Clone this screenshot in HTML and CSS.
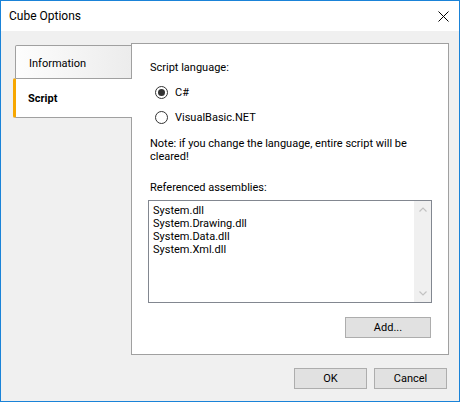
FILE: index.html
```html
<!DOCTYPE html>
<html>
<head>
<meta charset="utf-8">
<link rel="stylesheet" href="styles.css">
</head>
<body>
<div class="window">
  <div class="titlebar">
    <span class="title">Cube Options</span>
    <svg class="close" width="11" height="11" viewBox="0 0 11 11"><path d="M0.5 0.5 L10.5 10.5 M10.5 0.5 L0.5 10.5" stroke="#000" stroke-width="1" fill="none"/></svg>
  </div>
  <div class="client">
    <div class="main">
      <div class="tabs">
        <div class="tab">Information</div>
        <div class="tab selected">Script</div>
      </div>
      <div class="panel">
        <div class="label">Script language:</div>
        <div class="radios">
          <div class="radio"><span class="dot checked"></span><span>C#</span></div>
          <div class="radio"><span class="dot"></span><span>VisualBasic.NET</span></div>
        </div>
        <p class="note">Note: if you change the language, entire script will be<br>cleared!</p>
        <div class="label label-assemblies">Referenced assemblies:</div>
        <div class="listbox">
          <div class="items">
            <div>System.dll</div>
            <div>System.Drawing.dll</div>
            <div>System.Data.dll</div>
            <div>System.Xml.dll</div>
          </div>
          <div class="scrollbar">
            <div class="sbtn"><svg width="8" height="5" viewBox="0 0 8 5"><polyline points="0.5,4.5 4,1 7.5,4.5" fill="none" stroke="#c2c2c2" stroke-width="1.2"/></svg></div>
            <div class="sbtn"><svg width="8" height="5" viewBox="0 0 8 5"><polyline points="0.5,0.5 4,4 7.5,0.5" fill="none" stroke="#c2c2c2" stroke-width="1.2"/></svg></div>
          </div>
        </div>
        <div class="actions"><button class="btn add">Add...</button></div>
      </div>
    </div>
    <div class="footer">
      <button class="btn dlg">OK</button>
      <button class="btn dlg">Cancel</button>
    </div>
  </div>
</div>
</body>
</html>
```
FILE: styles.css
```css
html, body {
  margin: 0;
  padding: 0;
}
body {
  font-family: Roboto, "Liberation Sans", sans-serif;
  font-size: 11px;
  color: #000;
  background: #fff;
}
.window {
  width: 458px;
  height: 400px;
  border: 1px solid #1a83d8;
  background: #f0f0f0;
  display: flex;
  flex-direction: column;
}
.titlebar {
  height: 30px;
  background: #fff;
  display: flex;
  align-items: center;
  justify-content: space-between;
  padding: 0 10px 0 8px;
}
.title {
  font-size: 12px;
  line-height: 15px;
}
.close {
  display: block;
}
.client {
  flex: 1;
  display: flex;
  flex-direction: column;
  padding: 12px 10px 0 12px;
}
.main {
  display: flex;
}
.tabs {
  width: 119px;
  margin-right: -1px;
  position: relative;
  z-index: 1;
  padding-top: 2px;
  display: flex;
  flex-direction: column;
}
.tab {
  box-sizing: border-box;
  margin-left: 2px;
  width: 117px;
  height: 33px;
  border: 1px solid #a0a0a0;
  border-bottom: none;
  border-radius: 2px 0 0 0;
  background: linear-gradient(to right, #fdfdfd, #ececec);
  padding: 10px 0 0 13px;
  line-height: 15px;
}
.tab.selected {
  margin-left: 0;
  width: 119px;
  height: 40px;
  border: 1px solid #a0a0a0;
  border-left: 3px solid #f7a700;
  border-right: none;
  border-radius: 2px 0 0 2px;
  background: #fff;
  font-weight: bold;
  padding: 12px 0 0 12px;
}
.panel {
  box-sizing: border-box;
  width: 318px;
  height: 312px;
  border: 1px solid #a0a0a0;
  background: #fff;
  padding: 16px 16px 0 18px;
}
.label {
  line-height: 15px;
}
.radios {
  margin-top: 9px;
  display: flex;
  flex-direction: column;
  gap: 9px;
}
.radio {
  display: flex;
  align-items: center;
  height: 16px;
  gap: 7px;
  padding-left: 5px;
  line-height: 15px;
}
.dot {
  box-sizing: border-box;
  width: 13px;
  height: 13px;
  border: 1px solid #333;
  border-radius: 50%;
  background: #fff;
  display: flex;
  align-items: center;
  justify-content: center;
}
.dot.checked::after {
  content: "";
  width: 7px;
  height: 7px;
  border-radius: 50%;
  background: #333;
}
.note {
  margin: 12px 0 0;
  line-height: 13px;
}
.label-assemblies {
  margin-top: 17px;
}
.listbox {
  box-sizing: border-box;
  margin: 5px 0 0 -2px;
  width: 284px;
  height: 103px;
  border: 1px solid #828790;
  display: flex;
  background: #fff;
}
.items {
  flex: 1;
  padding: 3px 4px;
  line-height: 13px;
}
.scrollbar {
  width: 17px;
  background: #f0f0f0;
  display: flex;
  flex-direction: column;
  justify-content: space-between;
}
.sbtn {
  height: 17px;
  display: flex;
  align-items: center;
  justify-content: center;
}
.sbtn svg {
  display: block;
}
.actions {
  display: flex;
  justify-content: flex-end;
  margin-top: 14px;
}
.btn {
  box-sizing: border-box;
  font-family: inherit;
  font-size: 11px;
  color: #000;
  background: #e1e1e1;
  border: 1px solid #adadad;
  padding: 0;
  height: 21px;
  line-height: 15px;
}
.add {
  width: 86px;
  margin-right: 1px;
}
.footer {
  display: flex;
  justify-content: flex-end;
  gap: 7px;
  margin-top: 13px;
  padding-right: 2px;
}
.dlg {
  width: 73px;
}
```
